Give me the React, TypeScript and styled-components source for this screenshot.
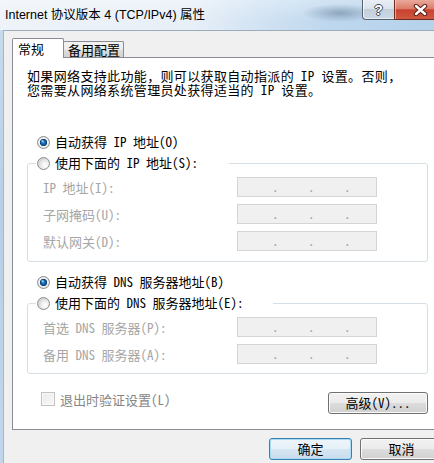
import React from "react";
import styled, { createGlobalStyle } from "styled-components";

const BODY_FONT = `"Noto Sans Mono CJK SC", "Noto Sans CJK SC", sans-serif`;

const GlobalStyle = createGlobalStyle`
  html, body { margin: 0; padding: 0; background: #f0f0f0; }
  body { width: 434px; height: 463px; overflow: hidden; }
  #root { width: 434px; height: 463px; }
  *, *::before, *::after { box-sizing: border-box; }
`;

const Viewport = styled.div`
  width: 434px;
  height: 463px;
  overflow: hidden;
`;

const Window = styled.div`
  width: 460px;
  height: 463px;
  display: flex;
  flex-direction: column;
  background: linear-gradient(180deg, #c9dcee 0%, #b7cfe7 45%, #c1d6ea 100%);
`;

const TitleBar = styled.div`
  height: 30px;
  flex: none;
  display: flex;
  align-items: flex-start;
  padding: 0 14px 0 5px;
  background:
    radial-gradient(38px 9px at 340px 13px, rgba(98, 124, 150, 0.55), rgba(98, 124, 150, 0) 100%),
    linear-gradient(180deg, rgba(255, 255, 255, 0.3), rgba(255, 255, 255, 0) 70%),
    linear-gradient(90deg, #eef3f9 0%, #e7eff7 42%, #d2e3f3 56%, #bdd7ee 72%, #b4d1eb 100%);
`;

const Title = styled.h1`
  margin: 0;
  flex: 1;
  font: 400 12.5px/30px "Liberation Sans", "Noto Sans CJK SC", sans-serif;
  color: #000;
  white-space: nowrap;
`;

const CaptionButtons = styled.div`
  display: flex;
  flex: none;
`;

const HelpButton = styled.div`
  width: 32px;
  height: 20px;
  display: flex;
  align-items: center;
  justify-content: center;
  border: 1px solid #56616e;
  border-top: none;
  border-right: none;
  border-radius: 0 0 0 4px;
  background: linear-gradient(180deg, #e9eef4 0%, #dbe3ec 45%, #c3cfdb 50%, #ccd8e4 100%);
  box-shadow: inset 1px 0 0 rgba(255, 255, 255, 0.7), inset 0 -1px 0 rgba(255, 255, 255, 0.5);
`;

const HelpGlyph = styled.span`
  font: 700 14px/1 "Liberation Sans", sans-serif;
  color: #fff;
  text-shadow: 1px 0 0 #3f4a57, -1px 0 0 #3f4a57, 0 1px 0 #3f4a57, 0 -1px 0 #3f4a57;
`;

const CloseButton = styled.div`
  width: 52px;
  height: 20px;
  display: flex;
  align-items: center;
  justify-content: center;
  border: 1px solid #6e2a20;
  border-top: none;
  border-radius: 0 0 4px 0;
  background: linear-gradient(180deg, #eaa99b 0%, #dd7d69 45%, #c8422f 52%, #d0583f 100%);
  box-shadow: inset 1px 0 0 rgba(255, 220, 210, 0.6);
`;

const Client = styled.div`
  flex: 1;
  margin: 0 3px;
  border-top: 1px solid #9eabb8;
  border-left: 1px solid #a9b5c1;
  border-right: 1px solid #a9b5c1;
  background: #f0f0f0;
  padding-top: 7px;
  font-family: ${BODY_FONT};
  font-size: 13px;
  color: #000;
`;

const TabStrip = styled.div`
  height: 19px;
  display: flex;
  align-items: flex-end;
  padding-left: 8px;
  position: relative;
  z-index: 1;
`;

const Tab = styled.div<{ $active?: boolean; $width: number }>`
  width: ${(p) => p.$width}px;
  height: ${(p) => (p.$active ? 20 : 16)}px;
  margin-bottom: ${(p) => (p.$active ? -1 : 0)}px;
  margin-left: ${(p) => (p.$active ? 0 : -1)}px;
  border: 1px solid #898c95;
  border-bottom: none;
  border-radius: 2px 2px 0 0;
  background: ${(p) =>
    p.$active ? "#ffffff" : "linear-gradient(180deg, #f3f3f3 0%, #ebebeb 50%, #dedede 50%, #d3d3d3 100%)"};
  position: relative;
  z-index: ${(p) => (p.$active ? 2 : 1)};
  padding-left: ${(p) => (p.$active ? 5 : 4)}px;
  line-height: ${(p) => (p.$active ? 19 : 15)}px;
  white-space: nowrap;
`;

const TabPanel = styled.div`
  width: 431px;
  height: 373px;
  margin-left: 8px;
  border: 1px solid #898c95;
  background: #ffffff;
  padding: 11px 14px 0;
  display: flex;
  flex-direction: column;
`;

const Intro = styled.p`
  margin: 0;
  line-height: 14px;
  letter-spacing: 0.35px;
  white-space: nowrap;
`;

const RadioRow = styled.div<{ $top: number }>`
  margin-top: ${(p) => p.$top}px;
  padding-left: 10px;
`;

const RadioOption = styled.label`
  display: flex;
  align-items: center;
  gap: 5px;
  height: 16px;
  line-height: 16px;
  white-space: nowrap;
`;

const RadioCircle = styled.span<{ $checked?: boolean }>`
  flex: none;
  width: 13px;
  height: 13px;
  border-radius: 50%;
  border: 1px solid #8a8c8e;
  background: ${(p) =>
    p.$checked
      ? `radial-gradient(circle at 42% 38%, rgba(190, 238, 255, 0.95) 0, rgba(190, 238, 255, 0) 1.8px),
         radial-gradient(circle at 50% 50%, #2a86d2 0, #125ea8 2.2px, #0b3b70 3.4px, rgba(11, 59, 112, 0) 3.9px),
         radial-gradient(circle at 50% 50%, #f6f6f6 0, #f6f6f6 3.8px, #e2e2e2 5.5px)`
      : `radial-gradient(circle at 65% 65%, #ffffff 0, #f3f3f3 3px, #d8d8d8 6.5px)`};
`;

const Group = styled.fieldset<{ $padBottom: number }>`
  margin: 5px 0 0;
  padding: 6px 0 ${(p) => p.$padBottom}px 0;
  border: 1px solid #d5dfe5;
  border-radius: 3px;
  min-width: 0;
`;

const GroupLegend = styled.legend<{ $width: number }>`
  width: ${(p) => p.$width}px;
  margin-left: 8px;
  padding: 0 0 0 1px;
`;

const FieldRows = styled.div`
  display: flex;
  flex-direction: column;
  gap: 7px;
  padding-left: 15px;
`;

const FieldRow = styled.div`
  display: flex;
  align-items: center;
  height: 20px;
`;

const FieldLabel = styled.span`
  width: 194px;
  flex: none;
  color: #a6a6a6;
  white-space: nowrap;
`;

const IpField = styled.div`
  width: 140px;
  height: 20px;
  display: flex;
  align-items: center;
  padding-left: 4px;
  border: 1px solid #d4d4d4;
  background: #f0f0f0;
`;

const Octet = styled.span`
  width: 30px;
  flex: none;
`;

const Dot = styled.span`
  width: 6px;
  flex: none;
  text-align: center;
  color: #9e9894;
  line-height: 18px;
`;

const BottomRow = styled.div`
  margin-top: 18px;
  display: flex;
  justify-content: space-between;
  align-items: flex-start;
`;

const CheckOption = styled.label`
  display: flex;
  align-items: center;
  gap: 5px;
  height: 14px;
  padding-left: 14px;
  color: #858585;
  white-space: nowrap;
`;

const CheckBox = styled.span`
  flex: none;
  width: 14px;
  height: 14px;
  border: 1px solid #c2c2c2;
  background: linear-gradient(135deg, #ececec 0%, #f6f6f6 100%);
  box-shadow: inset 0 0 0 1px #f9f9f9;
`;

const PushButton = styled.button<{ $width: number; $default?: boolean }>`
  width: ${(p) => p.$width}px;
  height: 22px;
  flex: none;
  padding: 0;
  font-family: ${BODY_FONT};
  font-size: 13px;
  line-height: 20px;
  color: #000;
  border-radius: 3px;
  border: 1px solid ${(p) => (p.$default ? "#3c7fb1" : "#707070")};
  background: ${(p) =>
    p.$default
      ? "linear-gradient(180deg, #eef5fb 0%, #e6f0f8 50%, #d6e6f3 50%, #cadcec 100%)"
      : "linear-gradient(180deg, #f2f2f2 0%, #ebebeb 50%, #dddddd 50%, #d0d0d0 100%)"};
  box-shadow: inset 0 0 0 1px ${(p) => (p.$default ? "#a6dcf6" : "#fbfbfb")};
`;

const ButtonRow = styled.div`
  width: 431px;
  margin: 8px 0 0 8px;
  display: flex;
  justify-content: flex-end;
  gap: 8px;
`;

const IpInput: React.FC = () => (
  <IpField>
    <Octet />
    <Dot>.</Dot>
    <Octet />
    <Dot>.</Dot>
    <Octet />
    <Dot>.</Dot>
    <Octet />
  </IpField>
);

const CloseGlyph: React.FC = () => (
  <svg width="15" height="12" viewBox="0 0 15 12">
    <path d="M3 2 L12 10 M12 2 L3 10" stroke="#5a2018" strokeWidth="4.4" strokeLinecap="round" fill="none" />
    <path d="M3 2 L12 10 M12 2 L3 10" stroke="#ffffff" strokeWidth="2.4" strokeLinecap="round" fill="none" />
  </svg>
);

export default function App() {
  return (
    <>
      <GlobalStyle />
      <Viewport>
        <Window>
          <TitleBar>
            <Title>Internet 协议版本 4 (TCP/IPv4) 属性</Title>
            <CaptionButtons>
              <HelpButton>
                <HelpGlyph>?</HelpGlyph>
              </HelpButton>
              <CloseButton>
                <CloseGlyph />
              </CloseButton>
            </CaptionButtons>
          </TitleBar>
          <Client>
            <TabStrip>
              <Tab $active $width={52}>常规</Tab>
              <Tab $width={61}>备用配置</Tab>
            </TabStrip>
            <TabPanel>
              <Intro>
                如果网络支持此功能，则可以获取自动指派的 IP 设置。否则，
                <br />
                您需要从网络系统管理员处获得适当的 IP 设置。
              </Intro>

              <RadioRow $top={37}>
                <RadioOption>
                  <RadioCircle $checked />
                  自动获得 IP 地址(O)
                </RadioOption>
              </RadioRow>

              <Group $padBottom={10}>
                <GroupLegend $width={193}>
                  <RadioOption>
                    <RadioCircle />
                    使用下面的 IP 地址(S):
                  </RadioOption>
                </GroupLegend>
                <FieldRows>
                  <FieldRow>
                    <FieldLabel>IP 地址(I):</FieldLabel>
                    <IpInput />
                  </FieldRow>
                  <FieldRow>
                    <FieldLabel>子网掩码(U):</FieldLabel>
                    <IpInput />
                  </FieldRow>
                  <FieldRow>
                    <FieldLabel>默认网关(D):</FieldLabel>
                    <IpInput />
                  </FieldRow>
                </FieldRows>
              </Group>

              <RadioRow $top={12}>
                <RadioOption>
                  <RadioCircle $checked />
                  自动获得 DNS 服务器地址(B)
                </RadioOption>
              </RadioRow>

              <Group $padBottom={9}>
                <GroupLegend $width={237}>
                  <RadioOption>
                    <RadioCircle />
                    使用下面的 DNS 服务器地址(E):
                  </RadioOption>
                </GroupLegend>
                <FieldRows>
                  <FieldRow>
                    <FieldLabel>首选 DNS 服务器(P):</FieldLabel>
                    <IpInput />
                  </FieldRow>
                  <FieldRow>
                    <FieldLabel>备用 DNS 服务器(A):</FieldLabel>
                    <IpInput />
                  </FieldRow>
                </FieldRows>
              </Group>

              <BottomRow>
                <CheckOption>
                  <CheckBox />
                  退出时验证设置(L)
                </CheckOption>
                <PushButton $width={100}>高级(V)...</PushButton>
              </BottomRow>
            </TabPanel>
            <ButtonRow>
              <PushButton $width={83} $default>确定</PushButton>
              <PushButton $width={83}>取消</PushButton>
            </ButtonRow>
          </Client>
        </Window>
      </Viewport>
    </>
  );
}
